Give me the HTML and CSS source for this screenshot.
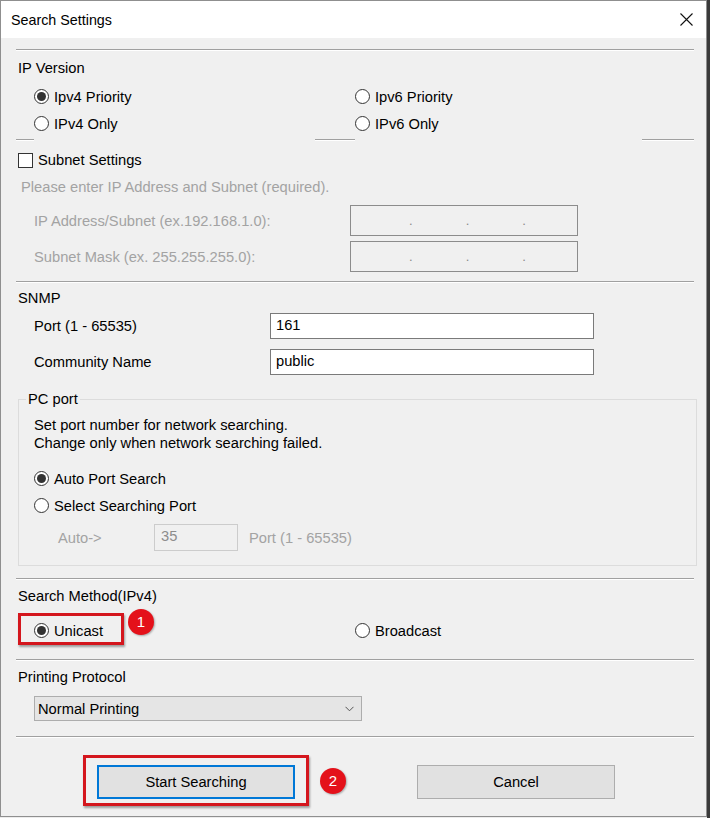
FILE: index.html
```html
<!DOCTYPE html>
<html>
<head>
<meta charset="utf-8">
<link rel="stylesheet" href="styles.css">
</head>
<body>
<div class="window">
  <div class="titlebar">
    <span class="title">Search Settings</span>
    <svg class="close" width="13" height="13" viewBox="0 0 13 13"><path d="M0.5 0.5 L12.5 12.5 M12.5 0.5 L0.5 12.5" stroke="#111" stroke-width="1.1" fill="none"/></svg>
  </div>
  <div class="content">
    <div class="sep sep-top"></div>
    <div class="label l-ipver">IP Version</div>
    <div class="radio-grid">
      <div class="opt"><span class="radio checked"></span>Ipv4 Priority</div>
      <div class="opt"><span class="radio"></span>Ipv6 Priority</div>
      <div class="opt"><span class="radio"></span>IPv4 Only</div>
      <div class="opt"><span class="radio"></span>IPv6 Only</div>
    </div>
    <div class="seg-sep"><span class="seg s1"></span><span class="seg s2"></span><span class="seg s3"></span></div>

    <div class="check-row"><span class="checkbox"></span>Subnet Settings</div>
    <div class="hint disabled">Please enter IP Address and Subnet (required).</div>
    <div class="field-row ip-row first-ip">
      <span class="field-label ip-label disabled">IP Address/Subnet (ex.192.168.1.0):</span>
      <div class="ipbox"><span>.</span><span>.</span><span>.</span></div>
    </div>
    <div class="field-row ip-row second-ip">
      <span class="field-label ip-label disabled">Subnet Mask (ex. 255.255.255.0):</span>
      <div class="ipbox"><span>.</span><span>.</span><span>.</span></div>
    </div>
    <div class="sep sep-snmp"></div>

    <div class="label l-snmp">SNMP</div>
    <div class="field-row snmp-row first-snmp">
      <span class="field-label snmp-label">Port (1 - 65535)</span>
      <div class="text-input">161</div>
    </div>
    <div class="field-row snmp-row second-snmp">
      <span class="field-label snmp-label">Community Name</span>
      <div class="text-input">public</div>
    </div>

    <div class="group">
      <div class="group-title">PC port</div>
      <div class="group-text">Set port number for network searching.<br>Change only when network searching failed.</div>
      <div class="radio-col">
        <div class="opt"><span class="radio checked"></span>Auto Port Search</div>
        <div class="opt"><span class="radio"></span>Select Searching Port</div>
      </div>
      <div class="auto-row">
        <span class="auto-label disabled">Auto-&gt;</span>
        <div class="port-box">35</div>
        <span class="port-range disabled">Port (1 - 65535)</span>
      </div>
    </div>
    <div class="sep sep-method"></div>

    <div class="label l-method">Search Method(IPv4)</div>
    <div class="radio-grid method-grid">
      <div class="opt annotated"><span class="radio checked"></span>Unicast<span class="annot annot-1"></span><span class="badge badge-1">1</span></div>
      <div class="opt"><span class="radio"></span>Broadcast</div>
    </div>
    <div class="sep sep-proto"></div>

    <div class="label l-proto">Printing Protocol</div>
    <div class="select">
      <span>Normal Printing</span>
      <svg width="9" height="6" viewBox="0 0 9 6"><path d="M0.5 0.8 L4.5 4.8 L8.5 0.8" stroke="#555" stroke-width="1" fill="none"/></svg>
    </div>
    <div class="sep sep-bottom"></div>

    <div class="buttons">
      <div class="btn btn-default">Start Searching<span class="annot annot-2"></span><span class="badge badge-2">2</span></div>
      <div class="btn btn-cancel">Cancel</div>
    </div>
  </div>
</div>
</body>
</html>
```

FILE: styles.css
```css
html, body {
  margin: 0;
  padding: 0;
}
body {
  width: 710px;
  height: 818px;
  overflow: hidden;
  background: linear-gradient(to right, #ececec 707px, #3a3a3a 707px);
  font-family: "Liberation Sans", Arial, sans-serif;
  font-size: 14.7px;
  color: #000;
}
.window {
  width: 707px;
  height: 817px;
  box-sizing: border-box;
  border: 1px solid #8f8f8f;
  background: #f0f0f0;
}
.titlebar {
  height: 37px;
  background: #fff;
  display: flex;
  align-items: center;
  justify-content: space-between;
  padding: 0 13px 0 10px;
}
.title {
  font-size: 14.3px;
  color: #000;
}
.content {
  padding: 0 12px 0 15px;
}
.sep {
  height: 0;
  border-top: 1px solid #a0a0a0;
  border-bottom: 1px solid #fff;
}
.sep-top { margin-top: 11px; }
.label {
  height: 20px;
  line-height: 20px;
  padding-left: 2px;
}
.l-ipver { margin-top: 7px; }
.radio-grid {
  display: grid;
  grid-template-columns: 321px 1fr;
  grid-auto-rows: 27px;
  padding-left: 18px;
  margin-top: 5px;
}
.opt {
  display: flex;
  align-items: center;
  position: relative;
  white-space: nowrap;
}
.radio {
  width: 15px;
  height: 15px;
  box-sizing: border-box;
  border: 1px solid #333;
  border-radius: 50%;
  background: #fff;
  margin-right: 5px;
  display: flex;
  align-items: center;
  justify-content: center;
  flex: none;
}
.radio.checked::after {
  content: "";
  width: 9px;
  height: 9px;
  border-radius: 50%;
  background: #333;
}
.seg-sep {
  display: flex;
  margin-top: 2px;
  height: 2px;
}
.seg {
  display: block;
  flex: none;
  height: 1px;
  background: #a0a0a0;
  border-bottom: 1px solid #fff;
}
.s1 { width: 18px; }
.s2 { width: 40px; margin-left: 281px; }
.s3 { width: 52px; margin-left: 287px; }

.check-row {
  display: flex;
  align-items: center;
  height: 20px;
  margin-top: 9px;
  padding-left: 2px;
}
.checkbox {
  width: 15px;
  height: 15px;
  box-sizing: border-box;
  border: 1px solid #333;
  background: #fff;
  margin-right: 5px;
}
.disabled { color: #a3a3a3; }
.hint {
  height: 20px;
  line-height: 20px;
  margin-top: 7px;
  padding-left: 5px;
}
.field-row {
  display: flex;
  align-items: center;
  padding-left: 18px;
}
.ip-label { width: 316px; }
.first-ip { margin-top: 8px; }
.second-ip { margin-top: 5px; }
.ipbox {
  width: 228px;
  height: 31px;
  box-sizing: border-box;
  border: 1px solid #8c8c8c;
  display: flex;
  align-items: center;
  padding-left: 58px;
  gap: 53px;
  color: #8a8a8a;
  font-size: 13px;
}
.sep-snmp { margin-top: 9px; }
.l-snmp { margin-top: 5px; }
.snmp-label { width: 236px; }
.first-snmp { margin-top: 5px; }
.second-snmp { margin-top: 10px; }
.text-input {
  width: 324px;
  height: 26px;
  box-sizing: border-box;
  border: 1px solid #7a7a7a;
  background: #fff;
  padding-left: 5px;
  line-height: 23px;
}

.group {
  margin: 24px -3px 0 2px;
  border: 1px solid #dcdcdc;
  padding: 0 0 14px 15px;
}
.group-title {
  width: fit-content;
  margin: -11px 0 0 7px;
  padding: 0 2px;
  height: 20px;
  line-height: 20px;
  background: #f0f0f0;
  position: relative;
  left: -15px;
}
.group-text {
  margin-top: 7px;
  line-height: 18px;
}
.radio-col {
  display: grid;
  grid-auto-rows: 27px;
  margin-top: 13px;
}
.auto-row {
  display: flex;
  align-items: center;
  margin-top: 5px;
  padding-left: 24px;
}
.auto-label { width: 96px; }
.port-box {
  width: 84px;
  height: 27px;
  box-sizing: border-box;
  border: 1px solid #cccccc;
  color: #8c8c8c;
  padding-left: 6px;
  line-height: 22px;
}
.port-range { margin-left: 11px; }
.sep-method { margin-top: 12px; }
.l-method { margin-top: 6px; }
.method-grid { margin-top: 11px; }
.annot {
  position: absolute;
  box-sizing: border-box;
  border: 3px solid #d4161d;
  box-shadow: 1px 2px 2px rgba(0,0,0,0.35);
  pointer-events: none;
}
.annot-1 {
  left: -16px;
  top: -4px;
  width: 106px;
  height: 32px;
}
.badge {
  position: absolute;
  width: 26px;
  height: 26px;
  border-radius: 50%;
  background: #e4111a;
  color: #fff;
  font-size: 15px;
  line-height: 26px;
  text-align: center;
  box-shadow: 1px 1px 2px rgba(0,0,0,0.3);
}
.badge-1 {
  left: 94px;
  top: -8px;
}
.sep-proto { margin-top: 15px; }
.l-proto { margin-top: 6px; }
.select {
  margin: 9px 0 0 18px;
  width: 328px;
  height: 25px;
  box-sizing: border-box;
  border: 1px solid #adadad;
  background: #e5e5e5;
  display: flex;
  align-items: center;
  justify-content: space-between;
  padding: 0 7px 0 3px;
}
.sep-bottom { margin-top: 15px; }
.buttons {
  display: flex;
  margin-top: 27px;
  padding-left: 81px;
}
.btn {
  position: relative;
  width: 198px;
  height: 34px;
  box-sizing: border-box;
  background: #e1e1e1;
  border: 1px solid #adadad;
  display: flex;
  align-items: center;
  justify-content: center;
}
.btn-default {
  border: 2px solid #0078d7;
}
.btn-cancel {
  margin-left: 122px;
}
.annot-2 {
  left: -16px;
  top: -12px;
  width: 226px;
  height: 51px;
}
.badge-2 {
  left: 221px;
  top: 1px;
}
```
